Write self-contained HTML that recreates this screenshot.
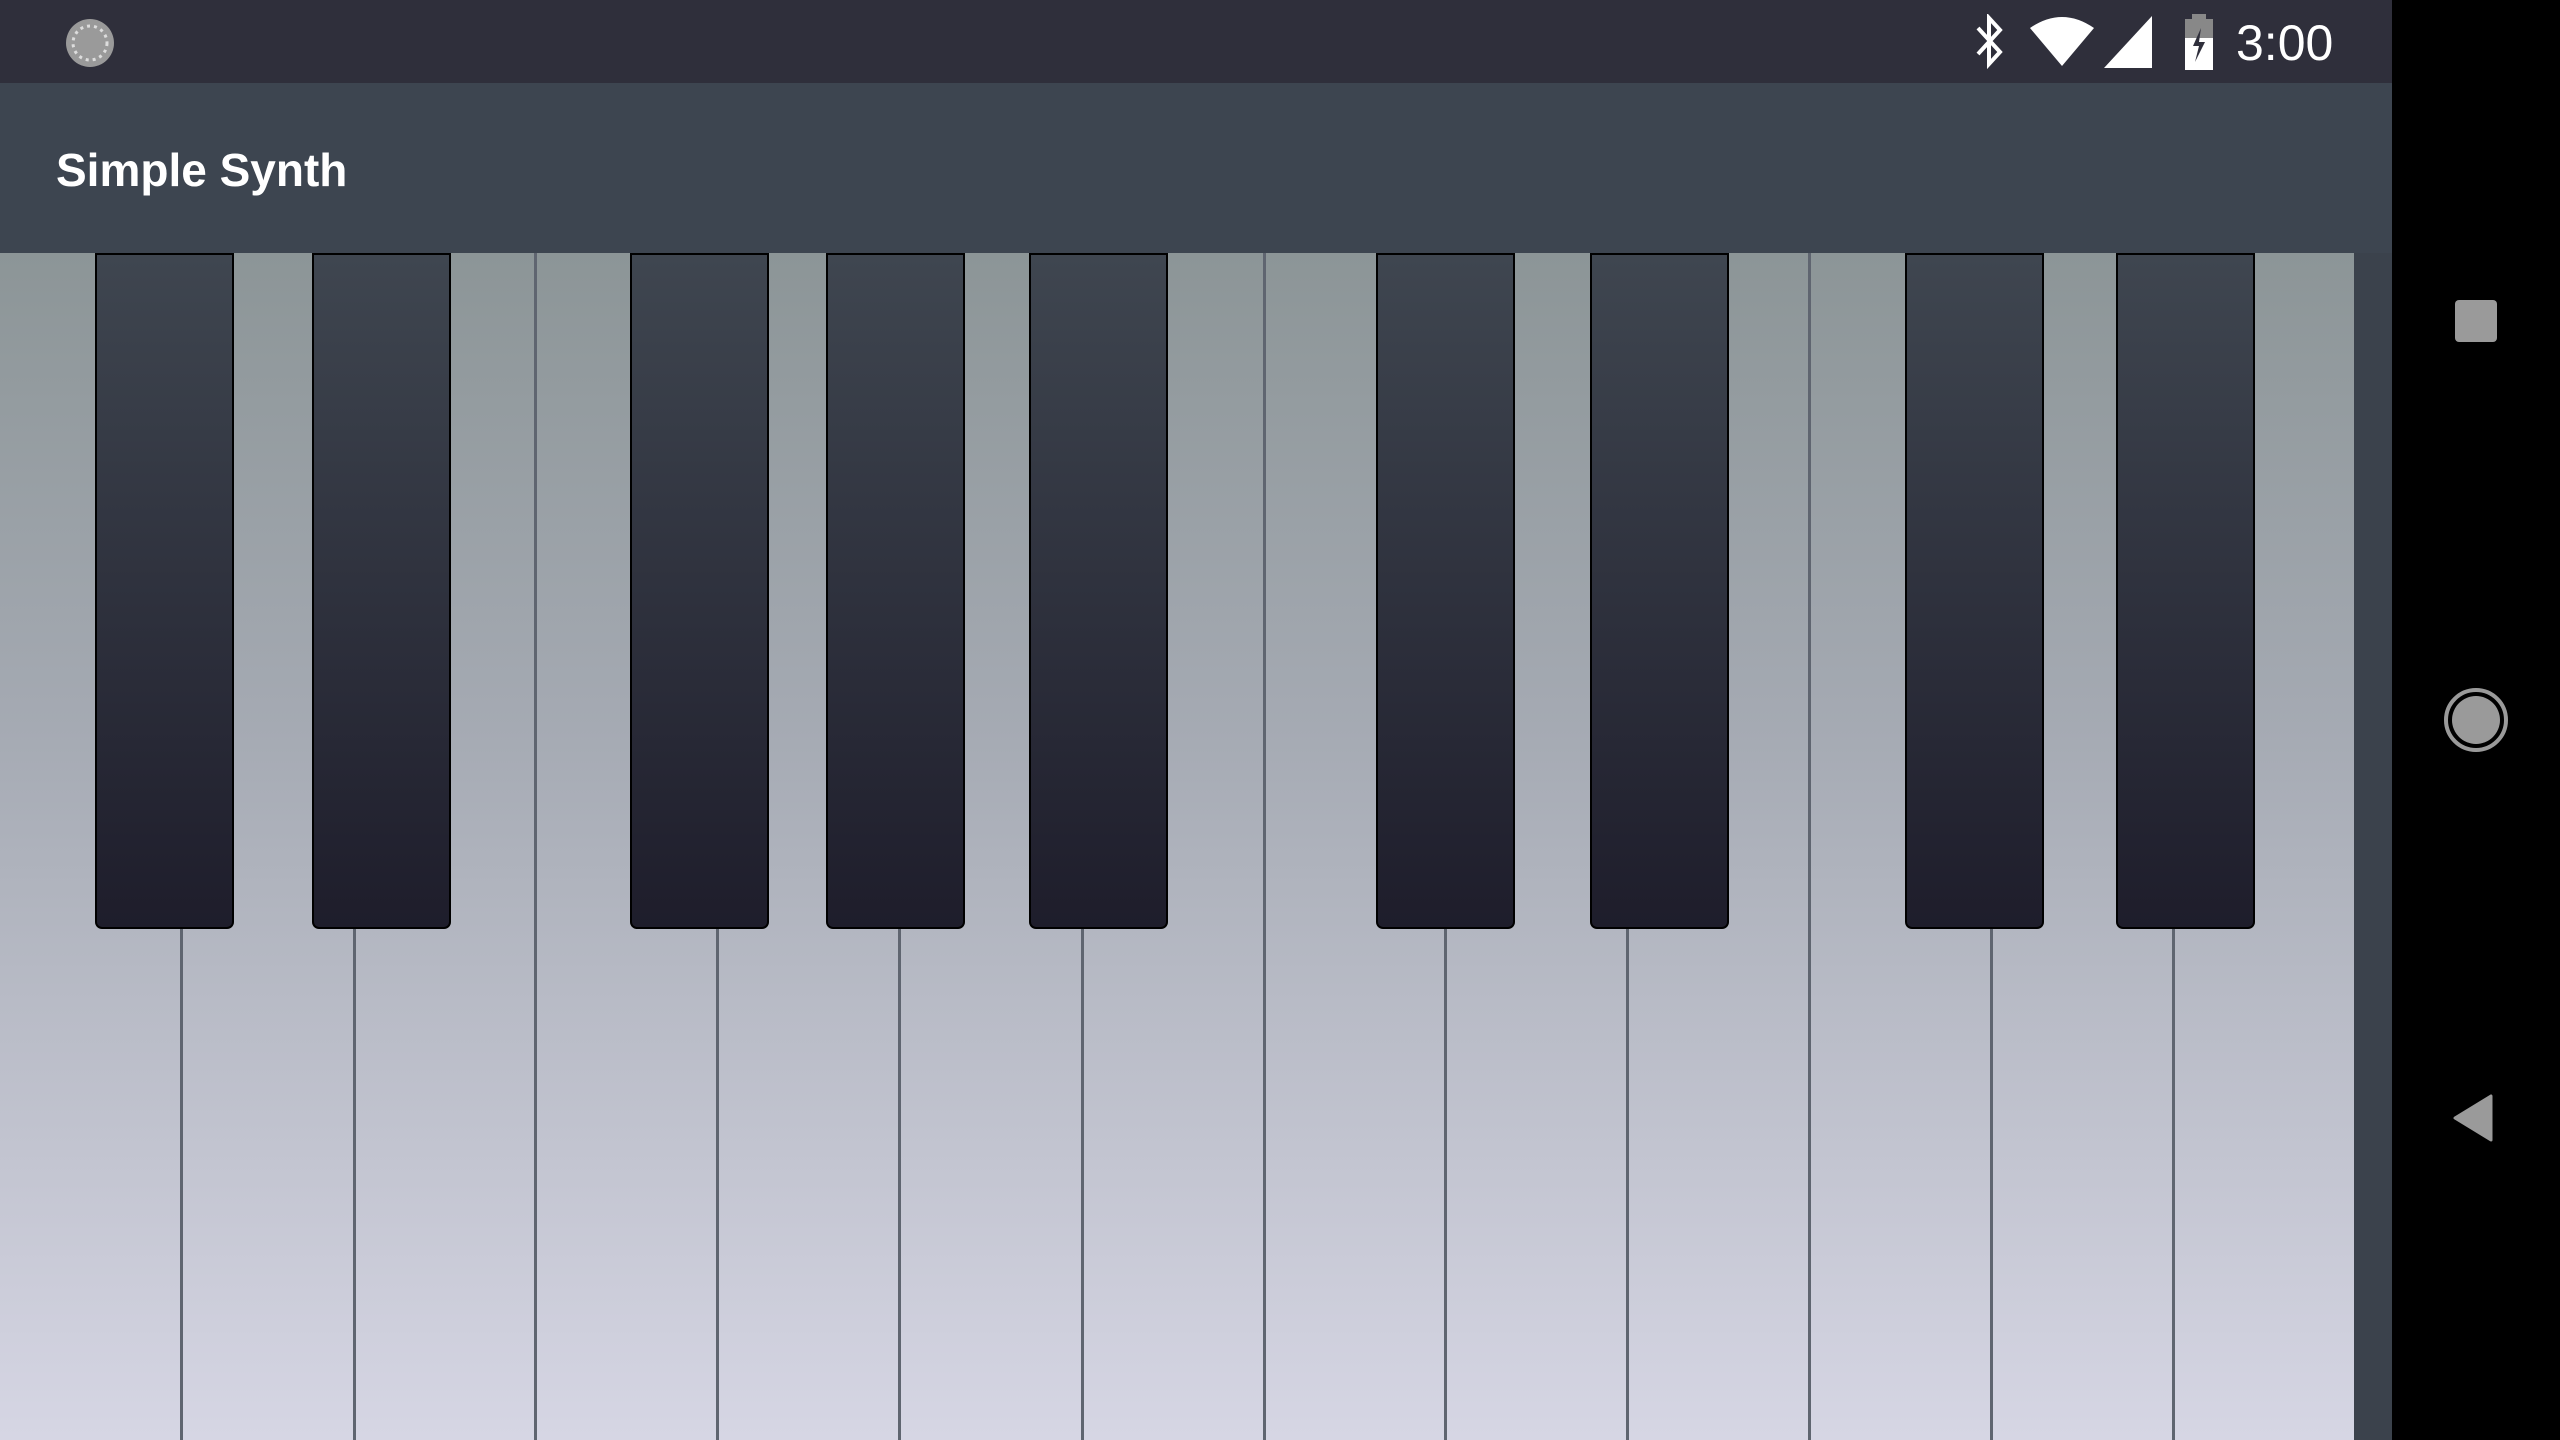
<!DOCTYPE html>
<html><head><meta charset="utf-8"><style>
*{margin:0;padding:0;box-sizing:border-box}
body{width:2560px;height:1440px;overflow:hidden;background:#000;font-family:"Liberation Sans",sans-serif;position:relative}
#status{position:absolute;left:0;top:0;width:2392px;height:83px;background:#2f2f3b}
#appbar{position:absolute;left:0;top:83px;width:2392px;height:170px;background:#3d4550}
#title{position:absolute;left:56px;font-size:46px;color:#fff;font-weight:bold;letter-spacing:0px}
#kb{position:absolute;left:0;top:253px;width:2354px;height:1187px;background:linear-gradient(#8c9597,#a5aab3 40%,#d6d6e4)}
#strip{position:absolute;left:2354px;top:253px;width:38px;height:1187px;background:#3b424c}
.wl{position:absolute;top:0;width:3px;height:1187px;background:#5f6570}
.bk{position:absolute;top:253px;width:139px;height:676px;background:linear-gradient(#3f4650,#1e1d2b);border:2px solid #000;border-radius:0 0 7px 7px}
#time{position:absolute;left:2236px;top:14px;font-size:50px;color:#fff}
</style></head><body>
<div id="status">
<svg style="position:absolute;left:64px;top:17px" width="52" height="52" viewBox="0 0 52 52"><circle cx="26" cy="26" r="24" fill="#9a9a9a"/><circle cx="26" cy="26" r="17" fill="none" stroke="#ddd" stroke-width="3" stroke-dasharray="3 4"/></svg>
<svg style="position:absolute;left:1970px;top:14px" width="40" height="56" viewBox="0 0 40 56"><path d="M8 14 L30 38 L19 50 L19 4 L30 16 L8 40" fill="none" stroke="#fff" stroke-width="4"/></svg>
<svg style="position:absolute;left:2030px;top:16px" width="64" height="52" viewBox="0 0 64 52"><path d="M0 12 Q32 -10 64 12 L32 50 Z" fill="#fff"/></svg>
<svg style="position:absolute;left:2104px;top:16px" width="48" height="52" viewBox="0 0 48 52"><path d="M48 0 L48 52 L0 52 Z" fill="#fff"/></svg>
<svg style="position:absolute;left:2183px;top:14px" width="32" height="56" viewBox="0 0 32 56"><rect x="9" y="0" width="14" height="6" fill="#888"/><rect x="2" y="5" width="28" height="20" fill="#888"/><rect x="2" y="24" width="28" height="32" fill="#fff"/><path d="M18 14 L10 32 L16 32 L12 48 L22 28 L16 28 Z" fill="#2f2f3b"/></svg>
<div id="time">3:00</div>
</div>
<div id="appbar"><div id="title" style="top:60px">Simple Synth</div></div>
<div id="kb">
<div class="wl" style="left:180px"></div><div class="wl" style="left:353px"></div><div class="wl" style="left:534px"></div><div class="wl" style="left:716px"></div><div class="wl" style="left:898px"></div><div class="wl" style="left:1081px"></div><div class="wl" style="left:1263px"></div><div class="wl" style="left:1444px"></div><div class="wl" style="left:1626px"></div><div class="wl" style="left:1808px"></div><div class="wl" style="left:1990px"></div><div class="wl" style="left:2172px"></div>
</div>
<div id="strip"></div>
<div class="bk" style="left:95px"></div><div class="bk" style="left:312px"></div><div class="bk" style="left:630px"></div><div class="bk" style="left:826px"></div><div class="bk" style="left:1029px"></div><div class="bk" style="left:1376px"></div><div class="bk" style="left:1590px"></div><div class="bk" style="left:1905px"></div><div class="bk" style="left:2116px"></div>
<div style="position:absolute;left:2455px;top:300px;width:42px;height:42px;background:#9a9a9a;border-radius:4px"></div>
<div style="position:absolute;left:2444px;top:688px;width:64px;height:64px;border:4px solid #9a9a9a;border-radius:50%;padding:4px"><div style="width:48px;height:48px;background:#9a9a9a;border-radius:50%"></div></div>
<svg style="position:absolute;left:2453px;top:1094px" width="40" height="48" viewBox="0 0 40 48"><path d="M38 2 L38 46 L2 24 Z" fill="#9a9a9a" stroke="#9a9a9a" stroke-width="3" stroke-linejoin="round"/></svg>
</body></html>
